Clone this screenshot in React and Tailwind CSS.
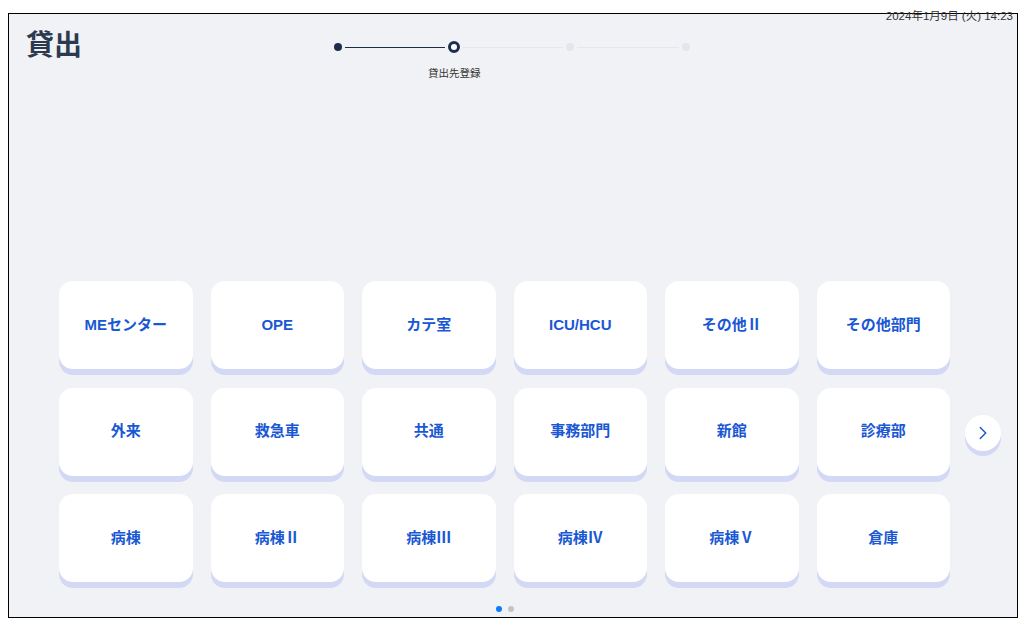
import { ChevronRight } from 'lucide-react'

const places = [
  'MEセンター', 'OPE', 'カテ室', 'ICU/HCU', 'その他Ⅱ', 'その他部門',
  '外来', '救急車', '共通', '事務部門', '新館', '診療部',
  '病棟', '病棟Ⅱ', '病棟Ⅲ', '病棟Ⅳ', '病棟Ⅴ', '倉庫',
]

export default function App() {
  return (
    <div className="w-full h-[624px] bg-white pt-[13px] pl-[8px] font-['Liberation_Sans','Noto_Sans_CJK_JP',sans-serif]">
      <div className="relative w-[1010px] h-[605px] border border-black bg-[#f0f2f6] flex flex-col">

        {/* 日時 */}
        <span className="absolute top-[-6px] right-[4px] text-[11.5px] leading-[16px] text-[#333]">
          2024年1月9日 (火) 14:23
        </span>

        {/* ヘッダー */}
        <div className="grid grid-cols-[1fr_auto_1fr] items-start pt-[14px]">
          <h1 className="pl-[17px] text-[28px] leading-[36px] font-bold text-[#2c3a4f]">貸出</h1>
          <div className="flex flex-col pt-[13px] pr-[2px]">
            <div className="flex items-center h-[12px]">
              <Dot done />
              <div className="w-[100px] h-px mx-[3px] bg-[#1f2d4d]" />
              <Ring />
              <div className="w-[100px] h-px mx-[3px] bg-[#e3e6ec]" />
              <Dot />
              <div className="w-[102px] h-px mx-[3px] bg-[#e3e6ec]" />
              <Dot />
            </div>
            <span className="ml-[94px] mt-[13px] text-[10.5px] leading-[14px] text-[#333]">貸出先登録</span>
          </div>
          <div />
        </div>

        <div className="flex-1" />

        {/* 貸出先一覧 */}
        <div className="flex items-start pl-[50px] pb-[5px]">
          <div className="flex flex-col items-center w-[891px]">
            <div className="grid grid-cols-6 gap-x-[18px] gap-y-[18.5px] w-full">
              {places.map(p => (
                <button key={p}
                  className="h-[88px] rounded-[14px] bg-white shadow-[0_6px_0_#d3d9f4] flex items-center justify-center text-[15px] font-bold text-[#1a58d3]">
                  {p}
                </button>
              ))}
            </div>
            <div className="flex gap-[6px] mt-[24px]">
              <span className="w-[6px] h-[6px] rounded-full bg-[#0a7cff]" />
              <span className="w-[6px] h-[6px] rounded-full bg-[#c4c4c4]" />
            </div>
          </div>
          <button className="ml-[15px] mt-[134px] w-[36px] h-[36px] rounded-full bg-white shadow-[0_5px_0_#d3d9f4] flex items-center justify-center text-[#1a58d3]">
            <ChevronRight size={22} strokeWidth={1.6} />
          </button>
        </div>
      </div>
    </div>
  )
}

function Dot({ done }) {
  return <div className={`w-[8px] h-[8px] rounded-full ${done ? 'bg-[#1f2d4d]' : 'bg-[#e3e6ec]'}`} />
}

function Ring() {
  return <div className="w-[12px] h-[12px] rounded-full border-[3px] border-[#1f2d4d] bg-white" />
}
